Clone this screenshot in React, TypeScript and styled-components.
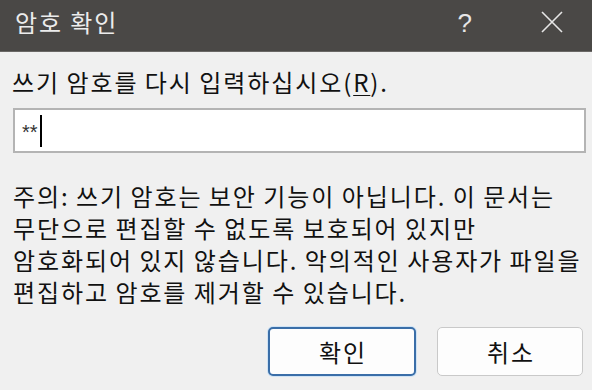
import React from 'react'
import styled, { createGlobalStyle } from 'styled-components'

const GlobalStyle = createGlobalStyle`
  html, body {
    margin: 0;
    padding: 0;
    background: #f0f0f0;
  }
  body {
    font-family: "Noto Sans CJK KR", "Noto Sans", sans-serif;
  }
`

const CloseIcon = () => (
  <svg width="22" height="22" viewBox="0 0 22 22">
    <path d="M1 1 L21 21 M21 1 L1 21" stroke="#e6e6e6" strokeWidth="1.6" fill="none" />
  </svg>
)

const App = () => {
  return (
    <>
      <GlobalStyle />
      <Dialog>
        <TitleBar>
          <Title>암호 확인</Title>
          <Controls>
            <HelpButton>?</HelpButton>
            <CloseButton>
              <CloseIcon />
            </CloseButton>
          </Controls>
        </TitleBar>
        <Content>
          <Label>
            쓰기 암호를 다시 입력하십시오(<u>R</u>).
          </Label>
          <PasswordBox>
            <Masked>**</Masked>
            <Caret />
          </PasswordBox>
          <Note>
            주의: 쓰기 암호는 보안 기능이 아닙니다. 이 문서는
            <br />
            무단으로 편집할 수 없도록 보호되어 있지만
            <br />
            암호화되어 있지 않습니다. 악의적인 사용자가 파일을
            <br />
            편집하고 암호를 제거할 수 있습니다.
          </Note>
          <ButtonRow>
            <Button primary>확인</Button>
            <Button>취소</Button>
          </ButtonRow>
        </Content>
      </Dialog>
    </>
  )
}

export default App

/////////////////////////////// styled components ///////////////////////////////

const Dialog = styled.div`
  width: 592px;
  height: 390px;
  background: #f0f0f0;
  display: flex;
  flex-direction: column;
  overflow: hidden;
  color: #111;
`

const TitleBar = styled.div`
  height: 52px;
  box-sizing: border-box;
  background: #4a4846;
  border-bottom: 1px solid #6a6866;
  display: flex;
  align-items: flex-start;
  justify-content: space-between;
  padding: 6px 29px 0 15px;
`

const Title = styled.div`
  font-size: 24px;
  line-height: 32px;
  letter-spacing: 1.9px;
  color: #ececec;
`

const Controls = styled.div`
  display: flex;
  align-items: center;
  gap: 69px;
  height: 34px;
`

const HelpButton = styled.div`
  font-family: "Liberation Sans", Arial, sans-serif;
  font-size: 26px;
  line-height: 32px;
  color: #e6e6e6;
`

const CloseButton = styled.div`
  display: flex;
  align-items: center;
  margin-top: -2px;
`

const Content = styled.div`
  padding: 14px 0 0 13px;
  display: flex;
  flex-direction: column;
`

const Label = styled.div`
  font-size: 24px;
  line-height: 32px;
  letter-spacing: 1.9px;
  word-spacing: -0.8px;
  margin-left: -1px;

  u {
    text-decoration-thickness: 1px;
    text-underline-offset: 3px;
  }
`

const PasswordBox = styled.div`
  margin-top: 10px;
  width: 573px;
  height: 45px;
  box-sizing: border-box;
  background: #fff;
  border: 2px solid #b4b4b4;
  display: flex;
  align-items: center;
  padding-left: 7px;
`

const Masked = styled.span`
  font-family: "Liberation Sans", Arial, sans-serif;
  font-size: 20px;
  line-height: 20px;
  color: #333;
  margin-top: 2px;
`

const Caret = styled.span`
  width: 2px;
  height: 32px;
  background: #000;
  margin-left: 2px;
`

const Note = styled.div`
  margin-top: 27px;
  font-size: 24px;
  line-height: 32px;
  letter-spacing: 1.9px;
  word-spacing: -0.8px;
  white-space: nowrap;
`

const ButtonRow = styled.div`
  margin-top: 19px;
  display: flex;
  justify-content: flex-end;
  gap: 21px;
  padding-right: 9px;
`

type ButtonProps = {
  primary?: boolean
}

const Button = styled.div<ButtonProps>`
  width: ${(p) => (p.primary ? '148px' : '146px')};
  height: 49px;
  box-sizing: border-box;
  background: #fdfdfd;
  border-radius: 5px;
  border: ${(p) => (p.primary ? '2px solid #3a6ea8' : '1.5px solid #c9c9c9')};
  box-shadow: ${(p) => (p.primary ? '0 0 0 1px #cfe3f5' : 'none')};
  display: flex;
  align-items: center;
  justify-content: center;
  font-size: 24px;
  line-height: 32px;
  letter-spacing: 1.9px;
  padding-left: 2px;
  color: #111;
`
